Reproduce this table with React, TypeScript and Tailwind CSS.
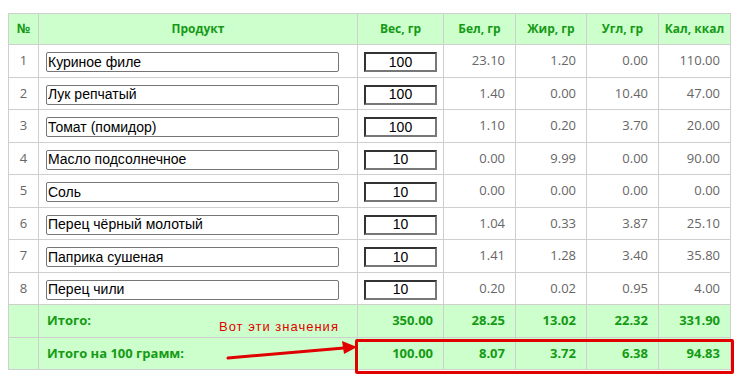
import React from 'react';

type Row = {
  name: string;
  weight: string;
  bel: string;
  fat: string;
  carb: string;
  kcal: string;
};

const rows: Row[] = [
  { name: 'Куриное филе', weight: '100', bel: '23.10', fat: '1.20', carb: '0.00', kcal: '110.00' },
  { name: 'Лук репчатый', weight: '100', bel: '1.40', fat: '0.00', carb: '10.40', kcal: '47.00' },
  { name: 'Томат (помидор)', weight: '100', bel: '1.10', fat: '0.20', carb: '3.70', kcal: '20.00' },
  { name: 'Масло подсолнечное', weight: '10', bel: '0.00', fat: '9.99', carb: '0.00', kcal: '90.00' },
  { name: 'Соль', weight: '10', bel: '0.00', fat: '0.00', carb: '0.00', kcal: '0.00' },
  { name: 'Перец чёрный молотый', weight: '10', bel: '1.04', fat: '0.33', carb: '3.87', kcal: '25.10' },
  { name: 'Паприка сушеная', weight: '10', bel: '1.41', fat: '1.28', carb: '3.40', kcal: '35.80' },
  { name: 'Перец чили', weight: '10', bel: '0.20', fat: '0.02', carb: '0.95', kcal: '4.00' },
];

const cell = 'border border-[#cfcfcf] h-[32.5px]';
const numCell = `${cell} text-right pr-[10px] text-[13px] text-[#666]`;
const headCell = 'border border-[#cfcfcf] h-[31px] text-center font-bold text-[12px] text-[#159a15]';
const totalCell = `${cell} text-right pr-[10px] font-bold text-[13px] text-[#159a15]`;

export default function App() {
  return (
    <div className="w-[744px] h-[384px] bg-white pt-[13px] pl-[8px] relative font-['Open_Sans','Noto_Sans',sans-serif]">
      <table className="border-collapse w-[722px] table-fixed">
        <colgroup>
          <col className="w-[30px]" />
          <col className="w-[319px]" />
          <col className="w-[86px]" />
          <col className="w-[72px]" />
          <col className="w-[71px]" />
          <col className="w-[72px]" />
          <col className="w-[72px]" />
        </colgroup>
        <thead>
          <tr className="bg-[#ccffcc]">
            <th className={`${headCell} text-[13px]`}>№</th>
            <th className={headCell}>Продукт</th>
            <th className={headCell}>Вес, гр</th>
            <th className={headCell}>Бел, гр</th>
            <th className={headCell}>Жир, гр</th>
            <th className={headCell}>Угл, гр</th>
            <th className={headCell}>Кал, ккал</th>
          </tr>
        </thead>
        <tbody>
          {rows.map((r, i) => (
            <tr key={i}>
              <td className={`${cell} text-center text-[13px] text-[#666]`}>{i + 1}</td>
              <td className={`${cell} pl-[7px] pr-[18px]`}>
                <input
                  readOnly
                  value={r.name}
                  className="w-full h-[20px] border border-[#767676] rounded-[2px] px-[1px] text-[14px] text-black font-['Liberation_Sans',Arial,sans-serif] outline-none"
                />
              </td>
              <td className={`${cell} pl-[6px]`}>
                <input
                  readOnly
                  value={r.weight}
                  className="w-[73px] h-[20px] border-2 border-t-[#333] border-l-[#333] border-b-[#777] border-r-[#777] text-center text-[14px] text-black font-['Liberation_Sans',Arial,sans-serif] outline-none"
                />
              </td>
              <td className={numCell}>{r.bel}</td>
              <td className={numCell}>{r.fat}</td>
              <td className={numCell}>{r.carb}</td>
              <td className={numCell}>{r.kcal}</td>
            </tr>
          ))}
          <tr className="bg-[#ccffcc]">
            <td className={cell}></td>
            <td className={`${cell} pl-[8px] font-bold text-[13px] text-[#159a15]`}>Итого:</td>
            <td className={totalCell}>350.00</td>
            <td className={totalCell}>28.25</td>
            <td className={totalCell}>13.02</td>
            <td className={totalCell}>22.32</td>
            <td className={totalCell}>331.90</td>
          </tr>
          <tr className="bg-[#ccffcc]">
            <td className={cell}></td>
            <td className={`${cell} pl-[8px] font-bold text-[13px] text-[#159a15]`}>Итого на 100 грамм:</td>
            <td className={totalCell}>100.00</td>
            <td className={totalCell}>8.07</td>
            <td className={totalCell}>3.72</td>
            <td className={totalCell}>6.38</td>
            <td className={totalCell}>94.83</td>
          </tr>
        </tbody>
      </table>

      {/* annotation overlay */}
      <div className="absolute left-[355px] top-[339px] w-[379px] h-[35px] border-[3px] border-[#e00000] rounded-[2px]" />
      <div className="absolute left-[219px] top-[317px] text-[13px] tracking-[1px] text-[#e00000] font-['Liberation_Sans',Arial,sans-serif]">
        Вот эти значения
      </div>
      <svg className="absolute left-[226px] top-[338px]" width="134" height="24" viewBox="0 0 134 24">
        <line x1="2" y1="20" x2="118" y2="10" stroke="#e00000" strokeWidth="3" strokeLinecap="round" />
        <polygon points="131,9 116,3 118,16" fill="#e00000" />
      </svg>
    </div>
  );
}
